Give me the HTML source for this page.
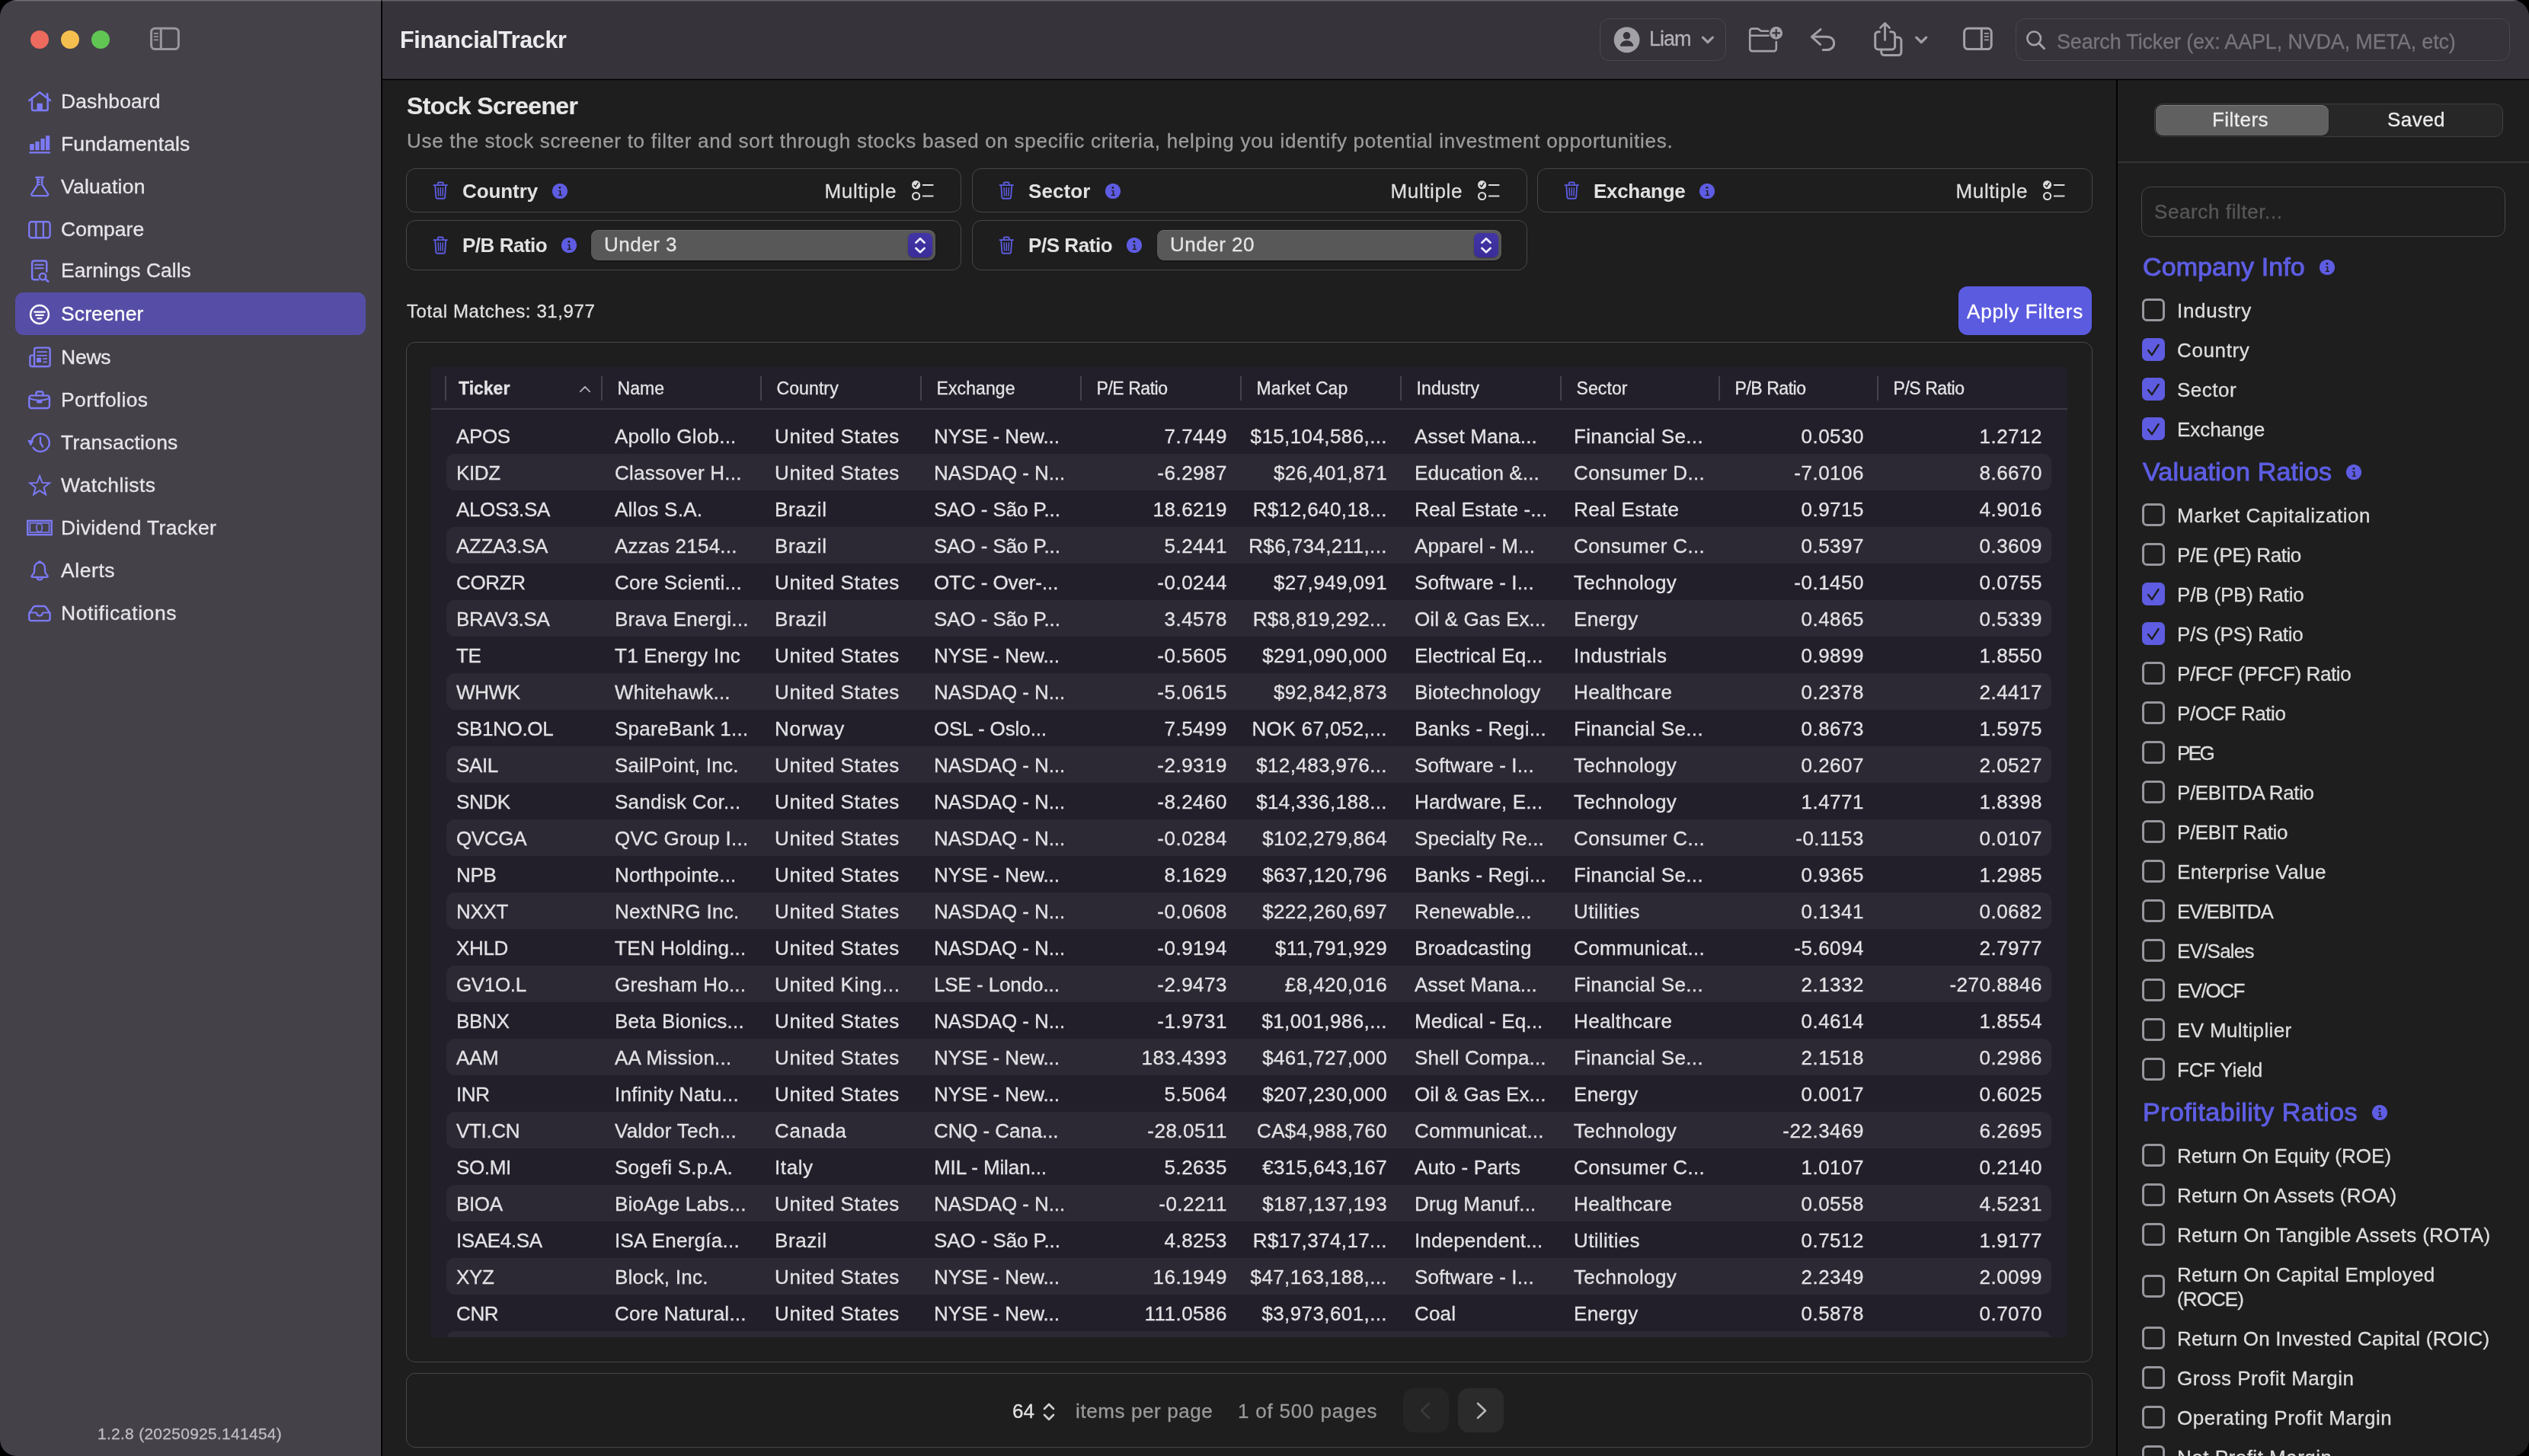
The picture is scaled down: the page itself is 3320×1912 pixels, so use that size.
<!DOCTYPE html>
<html lang="en"><head><meta charset="utf-8"><title>FinancialTrackr</title>
<style>
*{box-sizing:border-box;margin:0;padding:0}
html,body{width:3320px;height:1912px;background:#000;overflow:hidden}
body{font-family:"Liberation Sans",sans-serif;color:#e4e4e6;font-size:26px;-webkit-font-smoothing:antialiased;-webkit-text-stroke:.3px currentColor}
i{font-style:normal}
#win{position:absolute;left:0;top:0;width:3320px;height:1912px;border-radius:22px;overflow:hidden;background:#1e1e1e;will-change:transform}
#win:after{content:"";position:absolute;left:0;top:0;right:0;height:2px;background:linear-gradient(rgba(255,255,255,.3),rgba(255,255,255,.04));pointer-events:none}
@media (max-width:1700px){html,body{width:1660px;height:956px}#win{transform:scale(.5);transform-origin:0 0}}
/* sidebar */
#side{position:absolute;left:0;top:0;width:500px;height:1912px;background:#444149}
#sideline{position:absolute;left:500px;top:0;width:2px;height:1912px;background:#000}#side:after{content:"";position:absolute;right:0;top:0;width:1px;height:100%;background:#4c4a51}
.tl{position:absolute;top:40px;width:24px;height:24px;border-radius:50%}
.nav{position:absolute;left:20px;width:460px;height:56px;border-radius:11px}
.nav.sel{background:#564ea6}
.nav svg{position:absolute;left:12px;top:8px}
.nav span{position:absolute;left:60px;top:0;line-height:56px;font-size:26.5px;color:#e6e5e8;letter-spacing:.1px;white-space:nowrap}
.nav.sel span{color:#fff}
#ver{position:absolute;left:128px;top:1870px;font-size:21px;line-height:26px;color:#bdbcc1;letter-spacing:.27px;white-space:nowrap}
/* toolbar */
#barbg{position:absolute;left:502px;top:0;width:2818px;height:104px;background:#36333a}#bar{position:absolute;left:503px;top:0;width:2817px;height:104px}
#barline{position:absolute;left:502px;top:104px;width:2818px;height:1px;background:#000;box-shadow:0 -0.5px 0 rgba(0,0,0,.5),0 .5px 0 rgba(0,0,0,.4)}
#title{position:absolute;left:22px;top:32.2px;font-size:30.5px;line-height:40px;font-weight:bold;color:#ececee;letter-spacing:-.35px;white-space:nowrap;-webkit-text-stroke:0}
.tbtn{position:absolute;top:24px;height:56px;border:1.4px solid #4a484f;border-radius:13px}
/* main */
#main{position:absolute;left:503px;top:106px;width:2275px;height:1806px}
h1{position:absolute;left:31px;top:12.5px;font-size:32px;line-height:40px;font-weight:bold;color:#e6e6e6;letter-spacing:-.62px;-webkit-text-stroke:.2px;white-space:nowrap}
#sub{position:absolute;left:31px;top:63px;font-size:26px;line-height:32px;color:#9c9c9e;letter-spacing:.72px;white-space:nowrap}
.card{position:absolute;border:1px solid #474747;border-radius:12px}
.fc .trash{position:absolute;left:34.4px}
.fc .lbl{position:absolute;left:73px;font-weight:bold;font-size:26px;color:#e2e2e2;letter-spacing:-.1px;white-space:nowrap;-webkit-text-stroke:0}
.fc .iw{display:inline-block;margin-left:19px;vertical-align:middle;position:relative;top:-2px}.fc .iw svg{display:block}
.fc .mult{position:absolute;right:84px;font-size:26px;color:#dedede;letter-spacing:.6px;white-space:nowrap}
.fc .chk{position:absolute;right:34px}
.sel2{position:absolute;height:40px;top:12px;background:#585858;border-radius:9px;box-shadow:0 1px 2px rgba(0,0,0,.5), inset 0 1px 0 rgba(255,255,255,.12)}
.sel2 span{position:absolute;left:17.5px;top:0;line-height:38px;font-size:26px;color:#e4e4e4;letter-spacing:.5px}
.sel2 i{position:absolute;right:4px;top:4px;width:32px;height:32px;border-radius:7px;background:linear-gradient(#4235a6,#3a2d98);box-shadow:0 1px 2px rgba(0,0,0,.35)}
#tm{position:absolute;left:31px;top:288px;font-size:24px;line-height:30px;color:#e0e0e0;letter-spacing:.6px;white-space:nowrap}
#apply{position:absolute;left:2068px;top:270px;width:175px;height:64px;border-radius:12px;background:#5b5be0;color:#fff;font-size:26px;line-height:67.5px;text-align:center;letter-spacing:.75px;white-space:nowrap}
/* table */
.tbl{position:absolute;left:63px;top:376px;width:2148px;height:1274px;background:#221f2a;overflow:hidden}
.tbl .sep{position:absolute;top:12px;width:2px;height:32px;background:#45424d}
.tbl .th{position:absolute;top:13px;line-height:30px;font-size:23px;color:#e3e3e6;letter-spacing:.1px;white-space:nowrap}
.tbl .th.b{font-weight:bold;letter-spacing:0}
.tbl .sort{position:absolute;left:194px;top:23px}
.tbl .hline{position:absolute;left:0;right:0;top:54px;height:2px;background:#3b3946}
.row{position:absolute;left:20px;width:2107px;height:48px;border-radius:11px}
.row.alt{background:#2c2934}
.row .c{position:absolute;top:.8px;line-height:48px;font-size:26px;color:#e2e2e5;white-space:nowrap;letter-spacing:.35px}
.k0{letter-spacing:-.35px!important}.k1{letter-spacing:.25px!important}.k2{letter-spacing:.6px!important}.k3{letter-spacing:-.1px!important}.k4,.k8,.k9{letter-spacing:.5px!important}.k5{letter-spacing:.4px!important}.k6{letter-spacing:.15px!important}.k7{letter-spacing:.35px!important}
.tbl .th.rt{letter-spacing:-.45px}
/* pagination */
.pg{position:absolute;top:1717px;font-size:26px;line-height:32px;white-space:nowrap;letter-spacing:.6px}
.pbtn{position:absolute;top:1717px;width:60px;height:58px;border-radius:14px;background:#2b2b2b}
/* right panel */
#rline{position:absolute;left:2778px;top:104px;width:2px;height:1808px;background:#000}
#right{position:absolute;left:2780px;top:104px;width:540px;height:1808px;background:#1e1e1e;overflow:hidden}
#seg{position:absolute;left:48px;top:32px;width:458px;height:44px;border-radius:11px;background:#272727;border:1px solid #404040}
#seg b{position:absolute;left:1px;top:1px;width:227px;height:40px;border-radius:9px;background:#606060;box-shadow:0 1px 2px rgba(0,0,0,.4),inset 0 1px 0 rgba(255,255,255,.2)}
#seg span{position:absolute;top:1px;line-height:38px;font-size:26px;color:#ececec;width:226px;text-align:center;letter-spacing:.45px}
#rdiv{position:absolute;left:0;top:108px;width:540px;height:2px;background:#333}
#sf{position:absolute;left:31px;top:141px;width:478px;height:66px;border:1px solid #474747;border-radius:12px}
#sf span{position:absolute;left:16px;top:0;line-height:64px;font-size:26px;color:#585858;letter-spacing:.6px}
.gh{position:absolute;left:33px;height:48px;white-space:nowrap}
.gh span{font-size:34px;line-height:48px;color:#5d5de3;letter-spacing:.45px;-webkit-text-stroke:1px #5d5de3}
.gh .info{position:relative;margin-left:19px;top:-1px}
.cb{position:absolute;left:32px;width:30px;height:30px;border:3px solid #98979d;border-radius:6.5px}
.cb.on{border:0;background:#5e5ce0}
.cb svg{position:absolute;left:0;top:0}
.cl{position:absolute;left:78px;margin-top:.6px;line-height:32px;font-size:26px;color:#dedede;letter-spacing:.3px;white-space:nowrap}
</style></head>
<body>
<div id="win">
<!-- SIDEBAR -->
<div id="side">
<i class="tl" style="left:40px;background:#ed6a5e"></i><i class="tl" style="left:80px;background:#f5bf4f"></i><i class="tl" style="left:120px;background:#61c554"></i>
<svg style="position:absolute;left:190px;top:30px" width="52" height="42" viewBox="190 30 52 42"><g fill="none" stroke="#98979c" stroke-linecap="round"><rect x="198.6" y="37.2" width="35.8" height="27.4" rx="5" stroke-width="3"/><path d="M211.3 37.5v27" stroke-width="3"/><path d="M202.6 43.8h4.6M202.6 48.1h4.6M202.6 52.4h4.6" stroke-width="1.8"/></g></svg>
<div class="nav" style="top:104.5px"><svg width="40" height="40" viewBox="0 0 40 40" style="color:#7c7af6"><path d="M6.2 18.9 L20.2 8.2 L34 18.9" fill="none" stroke="currentColor" stroke-width="2.5" stroke-linecap="round" stroke-linejoin="round"/><path d="M30.1 10.4v4.6" fill="none" stroke="currentColor" stroke-linecap="round" stroke-linejoin="round" stroke-width="2.8"/><path d="M10 16.6v13.5a2 2 0 0 0 2 2h16.7a2 2 0 0 0 2-2V16.6" fill="none" stroke="currentColor" stroke-width="2.5" stroke-linecap="round" stroke-linejoin="round"/><rect x="16.5" y="22.7" width="7.4" height="9.6" fill="currentColor"/></svg><span style="letter-spacing:0.11px">Dashboard</span></div>
<div class="nav" style="top:160.5px"><svg width="40" height="40" viewBox="0 0 40 40" style="color:#7c7af6"><rect x="7.1" y="20" width="5.7" height="8.2" rx="1" fill="currentColor"/><rect x="14.3" y="16.8" width="5.3" height="11.4" rx="1" fill="currentColor"/><rect x="21.4" y="12.9" width="5.3" height="15.3" rx="1" fill="currentColor"/><rect x="28" y="8.9" width="5.3" height="19.3" rx="1" fill="currentColor"/><rect x="6.1" y="30.2" width="28.1" height="2.3" rx="1.1" fill="currentColor"/></svg><span style="letter-spacing:0.12px">Fundamentals</span></div>
<div class="nav" style="top:216.5px"><svg width="40" height="40" viewBox="0 0 40 40" style="color:#7c7af6"><path d="M15.3 7.9h9.8" fill="none" stroke="currentColor" stroke-linecap="round" stroke-linejoin="round" stroke-width="2.3"/><path d="M17.3 8.2v9.4L9.6 29.3c-.900 1.4 0 2.9 1.6 2.9h18c1.6 0 2.5-1.5 1.6-2.9L23.3 17.6V8.2" fill="none" stroke="currentColor" stroke-linecap="round" stroke-linejoin="round" stroke-width="2.3"/><path d="M18 10.9h2.6M18 14.2h2.6M18 17.4h2.6" fill="none" stroke="currentColor" stroke-linecap="round" stroke-linejoin="round" stroke-width="1.7"/></svg><span style="letter-spacing:0.23px">Valuation</span></div>
<div class="nav" style="top:272.5px"><svg width="40" height="40" viewBox="0 0 40 40" style="color:#7c7af6"><rect x="6.25" y="10.25" width="27.4" height="21" rx="3.2" fill="none" stroke="currentColor" stroke-linecap="round" stroke-linejoin="round" stroke-width="2.3"/><path d="M15.3 10.4v20.7M24.9 10.4v20.7" fill="none" stroke="currentColor" stroke-linecap="round" stroke-linejoin="round" stroke-width="2.3"/></svg><span style="letter-spacing:0.03px">Compare</span></div>
<div class="nav" style="top:326.5px"><svg width="40" height="40" viewBox="0 0 40 40" style="color:#7c7af6"><path d="M18.2 32.25H13a2.85 2.85 0 0 1-2.85-2.85V10.4A2.85 2.85 0 0 1 13 7.55h13.4a2.85 2.85 0 0 1 2.85 2.85v11.4" fill="none" stroke="currentColor" stroke-width="2.5" stroke-linecap="round" stroke-linejoin="round"/><path d="M14 12.8h10.8M14 17.3h10.8" fill="none" stroke="currentColor" stroke-linecap="round" stroke-linejoin="round" stroke-width="2"/><circle cx="24" cy="28.2" r="4.3" fill="none" stroke="currentColor" stroke-width="2.5" stroke-linecap="round" stroke-linejoin="round"/><path d="M27.3 31.3l3.9 3.3" fill="none" stroke="currentColor" stroke-linecap="round" stroke-linejoin="round" stroke-width="2.7"/></svg><span style="letter-spacing:0px">Earnings Calls</span></div>
<div class="nav sel" style="top:384px"><svg width="40" height="40" viewBox="0 0 40 40" style="color:#fff"><circle cx="20" cy="21" r="11.9" fill="none" stroke="currentColor" stroke-width="2.5" stroke-linecap="round" stroke-linejoin="round"/><path d="M13.3 17.7h13.4M15.1 21.8h9.8M17.4 26.1h5.2" fill="none" stroke="currentColor" stroke-linecap="round" stroke-linejoin="round" stroke-width="2.2"/></svg><span style="letter-spacing:0.12px">Screener</span></div>
<div class="nav" style="top:440.5px"><svg width="40" height="40" viewBox="0 0 40 40" style="color:#7c7af6"><path d="M13.05 32.25V10.45a2.8 2.8 0 0 1 2.8-2.8h15a2.8 2.8 0 0 1 2.8 2.8v19a2.8 2.8 0 0 1-2.8 2.8H10.15a2.8 2.8 0 0 1-2.8-2.8V20.25a2.6 2.6 0 0 1 2.6-2.6h3" fill="none" stroke="currentColor" stroke-linecap="round" stroke-linejoin="round" stroke-width="2.4"/><path d="M17.2 13.1h12M17.2 17.8h12M25 22.1h4.2M25 26.4h4.2" fill="none" stroke="currentColor" stroke-linecap="round" stroke-linejoin="round" stroke-width="1.7"/><rect x="16" y="20.7" width="6.1" height="6.4" rx="1.2" fill="currentColor"/></svg><span style="letter-spacing:-0.22px">News</span></div>
<div class="nav" style="top:496.5px"><svg width="40" height="40" viewBox="0 0 40 40" style="color:#7c7af6"><rect x="6.25" y="14.35" width="26.7" height="16.7" rx="3" fill="none" stroke="currentColor" stroke-linecap="round" stroke-linejoin="round" stroke-width="2.4"/><path d="M15.5 14.2v-2.5a2.4 2.4 0 0 1 2.4-2.4h4.2a2.4 2.4 0 0 1 2.4 2.4v2.5" fill="none" stroke="currentColor" stroke-linecap="round" stroke-linejoin="round" stroke-width="2.4"/><path d="M6.6 18.2c3.8 1.7 8.2 2.5 13 2.5s9.2-.8 13-2.5" fill="none" stroke="currentColor" stroke-linecap="round" stroke-linejoin="round" stroke-width="2"/><rect x="16.1" y="20.2" width="7.4" height="4.3" rx="1.4" fill="currentColor"/></svg><span style="letter-spacing:0.4px">Portfolios</span></div>
<div class="nav" style="top:552.5px"><svg width="40" height="40" viewBox="0 0 40 40" style="color:#7c7af6"><path d="M9.85 17.99A11.6 11.6 0 1 1 11.58 26.89" fill="none" stroke="currentColor" stroke-linecap="round" stroke-linejoin="round" stroke-width="2.4"/><path d="M5 17.3l6.3 1-3 5.4z" fill="currentColor" stroke="currentColor" stroke-width="1.2" stroke-linejoin="round"/><path d="M21 13.3v7.3l3.2 5" fill="none" stroke="currentColor" stroke-linecap="round" stroke-linejoin="round" stroke-width="2.3"/></svg><span style="letter-spacing:0.24px">Transactions</span></div>
<div class="nav" style="top:608.5px"><svg width="40" height="40" viewBox="0 0 40 40" style="color:#7c7af6"><path d="M20.1 8 L23.45 16.89 L32.94 17.33 L25.52 23.26 L28.04 32.42 L20.1 27.2 L12.16 32.42 L14.68 23.26 L7.26 17.33 L16.75 16.89z" fill="none" stroke="currentColor" stroke-linecap="round" stroke-width="2" stroke-linejoin="miter" stroke-miterlimit="10"/></svg><span style="letter-spacing:0.48px">Watchlists</span></div>
<div class="nav" style="top:664.5px"><svg width="40" height="40" viewBox="0 0 40 40" style="color:#7c7af6"><rect x="4.2" y="10.9" width="31.5" height="18.3" fill="none" stroke="currentColor" stroke-linecap="round" stroke-width="2.4" stroke-linejoin="miter"/><rect x="7.3" y="13.8" width="25.2" height="12.3" fill="none" stroke="currentColor" stroke-linecap="round" stroke-width="1.6" stroke-linejoin="miter"/><ellipse cx="19.65" cy="20.05" rx="3.8" ry="5.5" fill="none" stroke="currentColor" stroke-linecap="round" stroke-linejoin="round" stroke-width="1.6"/></svg><span style="letter-spacing:0.33px">Dividend Tracker</span></div>
<div class="nav" style="top:720.5px"><svg width="40" height="40" viewBox="0 0 40 40" style="color:#7c7af6"><path d="M20.1 9.7c-4.3 0-6.9 3.1-6.9 7.4v3.7c0 2-.9 3.5-2.4 5-.9.9-1.3 1.4-1.3 2 0 .7.6 1.1 1.5 1.1h18.2c.9 0 1.5-.4 1.5-1.1 0-.6-.4-1.1-1.3-2-1.5-1.5-2.4-3-2.4-5v-3.7c0-4.3-2.6-7.4-6.9-7.4z" fill="none" stroke="currentColor" stroke-linecap="round" stroke-linejoin="round" stroke-width="2.3"/><path d="M18.3 9.6c.2-1 .9-1.5 1.8-1.5s1.6.5 1.8 1.5" fill="none" stroke="currentColor" stroke-linecap="round" stroke-linejoin="round" stroke-width="1.8"/><path d="M16.6 29.8c.3 1.6 1.7 2.6 3.5 2.6s3.2-1 3.5-2.6" fill="none" stroke="currentColor" stroke-linecap="round" stroke-linejoin="round" stroke-width="2.2"/></svg><span style="letter-spacing:0.57px">Alerts</span></div>
<div class="nav" style="top:776.5px"><svg width="40" height="40" viewBox="0 0 40 40" style="color:#7c7af6"><path d="M6.25 20.3l5.4-8a3 3 0 0 1 2.5-1.3h11.6a3 3 0 0 1 2.5 1.3l5.4 8v6.9a2.9 2.9 0 0 1-2.9 2.9H9.15a2.9 2.9 0 0 1-2.9-2.9z" fill="none" stroke="currentColor" stroke-linecap="round" stroke-linejoin="round" stroke-width="2.4"/><path d="M6.6 19.5h8.4c.7 0 1.1.4 1.2 1 .3 1.9 1.8 3.1 3.75 3.1s3.45-1.2 3.75-3.1c.1-.6.5-1 1.2-1h8.4" fill="none" stroke="currentColor" stroke-linecap="round" stroke-linejoin="round" stroke-width="2.2"/></svg><span style="letter-spacing:0.6px">Notifications</span></div>
<div id="ver">1.2.8 (20250925.141454)</div>
</div>
<div id="sideline"></div>
<!-- TOOLBAR -->
<div id="barbg"></div>
<div id="bar">
<div id="title">FinancialTrackr</div>
<div style="position:absolute;left:-503px;top:0;width:3320px;height:104px">
<div class="tbtn" style="left:2100px;width:166px"></div>
<div class="tbtn" style="left:2646px;width:649.4px"></div>
<div style="position:absolute;left:2165px;top:31px;line-height:40px;font-size:27px;color:#b3b2b7;letter-spacing:-1px">Liam</div>
<div style="position:absolute;left:2700px;top:35px;line-height:40px;font-size:27px;color:#77757c;letter-spacing:-.17px;white-space:nowrap">Search Ticker (ex: AAPL, NVDA, META, etc)</div>
<svg style="position:absolute;left:2090px;top:0" width="640" height="104" viewBox="2090 0 640 104">
<circle cx="2135.6" cy="52.3" r="16.9" fill="#a2a1a6"/><circle cx="2135.5" cy="46.8" r="4.8" fill="#36333a"/><path d="M2127.8 60.7c-.600 0-.900-.400-.800-1 .800-3.9 4-6.5 8.6-6.5s7.8 2.6 8.6 6.5c.100.6-.200 1-.800 1z" fill="#36333a"/>
<path d="M2235.4 49.2l6.5 6.3 6.5-6.3" fill="none" stroke="#a2a1a6" stroke-linecap="round" stroke-linejoin="round" stroke-width="3.2"/>
<path d="M2515.7 49.2l6.5 6.3 6.5-6.3" fill="none" stroke="#a2a1a6" stroke-linecap="round" stroke-linejoin="round" stroke-width="3.2"/>
<path d="M2331.8 55v9.1a3 3 0 0 1-3 3h-28.6a3 3 0 0 1-3-3V40.6a3 3 0 0 1 3-3h6.4c1 0 1.7.300 2.4.900l1.5 1.3c.700.6 1.4.900 2.4.900h8.3" fill="none" stroke="#a2a1a6" stroke-width="2.6" stroke-linecap="round" stroke-linejoin="round"/><path d="M2297.4 46.7h24.2" fill="none" stroke="#a2a1a6" stroke-width="2.6" stroke-linecap="round" stroke-linejoin="round"/>
<circle cx="2331.7" cy="43.4" r="8.4" fill="#a2a1a6"/><path d="M2331.7 39v8.8M2327.3 43.4h8.8" stroke="#36333a" stroke-width="2.1" stroke-linecap="round"/>
<path d="M2390 38.6l-11.6 9.7 11.2 10.2" fill="none" stroke="#a2a1a6" stroke-linecap="round" stroke-linejoin="round" stroke-width="3"/><path d="M2379.4 48.3h18.4c6.2 0 9.8 3.6 9.8 8.6s-3.8 8.7-9.8 8.7h-4.6" fill="none" stroke="#a2a1a6" stroke-linecap="round" stroke-linejoin="round" stroke-width="3"/>
<path d="M2467.4 41.7h-1.7a4 4 0 0 0-4 4v15.2a4 4 0 0 0 4 4h17.9a4 4 0 0 0 4-4V45.7a4 4 0 0 0-4-4h-2" fill="none" stroke="#a2a1a6" stroke-linecap="round" stroke-linejoin="round" stroke-width="3"/>
<path d="M2469.7 66.8v1.8a4 4 0 0 0 4 4h18.2a4 4 0 0 0 4-4V53.1a4 4 0 0 0-4-4h-2.3" fill="none" stroke="#a2a1a6" stroke-linecap="round" stroke-linejoin="round" stroke-width="3"/>
<path d="M2474.5 52.6V30.6M2468.5 36.4l6-5.9 6 5.9" fill="none" stroke="#a2a1a6" stroke-linecap="round" stroke-linejoin="round" stroke-width="2.8"/>
<rect x="2578.6" y="37.3" width="35.6" height="27.3" rx="5" fill="none" stroke="#a2a1a6" stroke-linecap="round" stroke-linejoin="round" stroke-width="3"/><path d="M2601.3 37.5v27" fill="none" stroke="#a2a1a6" stroke-linecap="round" stroke-linejoin="round" stroke-width="3"/><path d="M2605.6 43.8h4.6M2605.6 48.1h4.6M2605.6 52.4h4.6" fill="none" stroke="#a2a1a6" stroke-linecap="round" stroke-linejoin="round" stroke-width="1.8"/>
<circle cx="2670.2" cy="50.3" r="8.8" fill="none" stroke="#a2a1a6" stroke-width="2.6" stroke-linecap="round" stroke-linejoin="round"/><path d="M2676.8 56.9l6.8 6.8" fill="none" stroke="#a2a1a6" stroke-linecap="round" stroke-linejoin="round" stroke-width="3"/>
</svg>
</div>
</div>
<!-- MAIN -->
<div id="main">
<h1>Stock Screener</h1>
<div id="sub">Use the stock screener to filter and sort through stocks based on specific criteria, helping you identify potential investment opportunities.</div>
<div class="card fc" style="left:30px;top:115px;width:729px;height:58px"><svg class="trash" style="top:16.4px" width="20.5" height="24" viewBox="0 0 22 26"><g fill="none" stroke="#5c5ce0" stroke-width="2" stroke-linecap="round" stroke-linejoin="round"><path d="M1.5 5.6h19"/><path d="M7.2 5.4V3.2a1.6 1.6 0 0 1 1.6-1.6h4.4a1.6 1.6 0 0 1 1.6 1.6v2.2"/><path d="M3.4 5.8l1.2 16.6a2.4 2.4 0 0 0 2.4 2.2h8a2.4 2.4 0 0 0 2.4-2.2l1.2-16.6"/><path d="M7.6 9.6l.5 11M11 9.6v11M14.4 9.6l-.5 11" stroke-width="1.6"/></g></svg><span class="lbl" style="top:0;line-height:59.5px;letter-spacing:-0.08px">Country<span class="iw"><svg class="info" width="20" height="20" viewBox="0 0 20 20"><circle cx="10" cy="10" r="10.1" fill="#5e5ce2"/><circle cx="9.9" cy="5.4" r="1.45" fill="#1e1e1e"/><path d="M8 8.9h3.3v5.8h1.7v1.2H7.8v-1.2h1.9v-4.6H8z" fill="#1e1e1e"/></svg></span></span><span class="mult" style="top:0;line-height:58px">Multiple</span><svg class="chk" style="top:15px" width="30" height="26" viewBox="0 0 30 26"><circle cx="5.6" cy="5.7" r="5.6" fill="#dcdcdc"/><path d="M3.2 6.2l1.8 2 3.1-4.8" fill="none" stroke="#1e1e1e" stroke-width="1.5" stroke-linecap="round" stroke-linejoin="round"/><circle cx="5.6" cy="20.5" r="4.55" fill="none" stroke="#dcdcdc" stroke-width="2.1"/><path d="M14.8 6h12.8M14.8 20.5h12.8" stroke="#dcdcdc" stroke-width="2.1" stroke-linecap="round"/></svg></div>
<div class="card fc" style="left:773px;top:115px;width:729px;height:58px"><svg class="trash" style="top:16.4px" width="20.5" height="24" viewBox="0 0 22 26"><g fill="none" stroke="#5c5ce0" stroke-width="2" stroke-linecap="round" stroke-linejoin="round"><path d="M1.5 5.6h19"/><path d="M7.2 5.4V3.2a1.6 1.6 0 0 1 1.6-1.6h4.4a1.6 1.6 0 0 1 1.6 1.6v2.2"/><path d="M3.4 5.8l1.2 16.6a2.4 2.4 0 0 0 2.4 2.2h8a2.4 2.4 0 0 0 2.4-2.2l1.2-16.6"/><path d="M7.6 9.6l.5 11M11 9.6v11M14.4 9.6l-.5 11" stroke-width="1.6"/></g></svg><span class="lbl" style="top:0;line-height:59.5px;letter-spacing:0.1px">Sector<span class="iw"><svg class="info" width="20" height="20" viewBox="0 0 20 20"><circle cx="10" cy="10" r="10.1" fill="#5e5ce2"/><circle cx="9.9" cy="5.4" r="1.45" fill="#1e1e1e"/><path d="M8 8.9h3.3v5.8h1.7v1.2H7.8v-1.2h1.9v-4.6H8z" fill="#1e1e1e"/></svg></span></span><span class="mult" style="top:0;line-height:58px">Multiple</span><svg class="chk" style="top:15px" width="30" height="26" viewBox="0 0 30 26"><circle cx="5.6" cy="5.7" r="5.6" fill="#dcdcdc"/><path d="M3.2 6.2l1.8 2 3.1-4.8" fill="none" stroke="#1e1e1e" stroke-width="1.5" stroke-linecap="round" stroke-linejoin="round"/><circle cx="5.6" cy="20.5" r="4.55" fill="none" stroke="#dcdcdc" stroke-width="2.1"/><path d="M14.8 6h12.8M14.8 20.5h12.8" stroke="#dcdcdc" stroke-width="2.1" stroke-linecap="round"/></svg></div>
<div class="card fc" style="left:1515px;top:115px;width:729px;height:58px"><svg class="trash" style="top:16.4px" width="20.5" height="24" viewBox="0 0 22 26"><g fill="none" stroke="#5c5ce0" stroke-width="2" stroke-linecap="round" stroke-linejoin="round"><path d="M1.5 5.6h19"/><path d="M7.2 5.4V3.2a1.6 1.6 0 0 1 1.6-1.6h4.4a1.6 1.6 0 0 1 1.6 1.6v2.2"/><path d="M3.4 5.8l1.2 16.6a2.4 2.4 0 0 0 2.4 2.2h8a2.4 2.4 0 0 0 2.4-2.2l1.2-16.6"/><path d="M7.6 9.6l.5 11M11 9.6v11M14.4 9.6l-.5 11" stroke-width="1.6"/></g></svg><span class="lbl" style="top:0;line-height:59.5px;letter-spacing:-0.3px">Exchange<span class="iw"><svg class="info" width="20" height="20" viewBox="0 0 20 20"><circle cx="10" cy="10" r="10.1" fill="#5e5ce2"/><circle cx="9.9" cy="5.4" r="1.45" fill="#1e1e1e"/><path d="M8 8.9h3.3v5.8h1.7v1.2H7.8v-1.2h1.9v-4.6H8z" fill="#1e1e1e"/></svg></span></span><span class="mult" style="top:0;line-height:58px">Multiple</span><svg class="chk" style="top:15px" width="30" height="26" viewBox="0 0 30 26"><circle cx="5.6" cy="5.7" r="5.6" fill="#dcdcdc"/><path d="M3.2 6.2l1.8 2 3.1-4.8" fill="none" stroke="#1e1e1e" stroke-width="1.5" stroke-linecap="round" stroke-linejoin="round"/><circle cx="5.6" cy="20.5" r="4.55" fill="none" stroke="#dcdcdc" stroke-width="2.1"/><path d="M14.8 6h12.8M14.8 20.5h12.8" stroke="#dcdcdc" stroke-width="2.1" stroke-linecap="round"/></svg></div>
<div class="card fc" style="left:30px;top:183px;width:729px;height:66px"><svg class="trash" style="top:20.4px" width="20.5" height="24" viewBox="0 0 22 26"><g fill="none" stroke="#5c5ce0" stroke-width="2" stroke-linecap="round" stroke-linejoin="round"><path d="M1.5 5.6h19"/><path d="M7.2 5.4V3.2a1.6 1.6 0 0 1 1.6-1.6h4.4a1.6 1.6 0 0 1 1.6 1.6v2.2"/><path d="M3.4 5.8l1.2 16.6a2.4 2.4 0 0 0 2.4 2.2h8a2.4 2.4 0 0 0 2.4-2.2l1.2-16.6"/><path d="M7.6 9.6l.5 11M11 9.6v11M14.4 9.6l-.5 11" stroke-width="1.6"/></g></svg><span class="lbl" style="top:0;line-height:65px;letter-spacing:-0.48px">P/B Ratio<span class="iw"><svg class="info" width="20" height="20" viewBox="0 0 20 20"><circle cx="10" cy="10" r="10.1" fill="#5e5ce2"/><circle cx="9.9" cy="5.4" r="1.45" fill="#1e1e1e"/><path d="M8 8.9h3.3v5.8h1.7v1.2H7.8v-1.2h1.9v-4.6H8z" fill="#1e1e1e"/></svg></span></span><div class="sel2" style="left:241.5px;width:452px"><span>Under 3</span><i><svg width="32" height="32" viewBox="0 0 32 32"><path d="M10.3 12.7L16 7.2l5.7 5.5M10.3 19.8L16 25.3l5.7-5.5" fill="none" stroke="#efecfb" stroke-width="2.6" stroke-linecap="round" stroke-linejoin="round"/></svg></i></div></div>
<div class="card fc" style="left:773px;top:183px;width:729px;height:66px"><svg class="trash" style="top:20.4px" width="20.5" height="24" viewBox="0 0 22 26"><g fill="none" stroke="#5c5ce0" stroke-width="2" stroke-linecap="round" stroke-linejoin="round"><path d="M1.5 5.6h19"/><path d="M7.2 5.4V3.2a1.6 1.6 0 0 1 1.6-1.6h4.4a1.6 1.6 0 0 1 1.6 1.6v2.2"/><path d="M3.4 5.8l1.2 16.6a2.4 2.4 0 0 0 2.4 2.2h8a2.4 2.4 0 0 0 2.4-2.2l1.2-16.6"/><path d="M7.6 9.6l.5 11M11 9.6v11M14.4 9.6l-.5 11" stroke-width="1.6"/></g></svg><span class="lbl" style="top:0;line-height:65px;letter-spacing:-0.44px">P/S Ratio<span class="iw"><svg class="info" width="20" height="20" viewBox="0 0 20 20"><circle cx="10" cy="10" r="10.1" fill="#5e5ce2"/><circle cx="9.9" cy="5.4" r="1.45" fill="#1e1e1e"/><path d="M8 8.9h3.3v5.8h1.7v1.2H7.8v-1.2h1.9v-4.6H8z" fill="#1e1e1e"/></svg></span></span><div class="sel2" style="left:241.5px;width:452px"><span>Under 20</span><i><svg width="32" height="32" viewBox="0 0 32 32"><path d="M10.3 12.7L16 7.2l5.7 5.5M10.3 19.8L16 25.3l5.7-5.5" fill="none" stroke="#efecfb" stroke-width="2.6" stroke-linecap="round" stroke-linejoin="round"/></svg></i></div></div>
<div id="tm">Total Matches: 31,977</div>
<div id="apply">Apply Filters</div>
<div class="card" style="left:30px;top:343px;width:2214px;height:1340px"></div>
<div class="tbl">
<i class="sep" style="left:18px"></i>
<div class="th b" style="left:36px">Ticker</div>
<i class="sep" style="left:223px"></i>
<div class="th" style="left:244.5px">Name</div>
<i class="sep" style="left:432px"></i>
<div class="th" style="left:453.5px">Country</div>
<i class="sep" style="left:642px"></i>
<div class="th" style="left:663.5px">Exchange</div>
<i class="sep" style="left:852px"></i>
<div class="th rt" style="left:873.5px">P/E Ratio</div>
<i class="sep" style="left:1062px"></i>
<div class="th" style="left:1083.5px">Market Cap</div>
<i class="sep" style="left:1272px"></i>
<div class="th" style="left:1293.5px">Industry</div>
<i class="sep" style="left:1482px"></i>
<div class="th" style="left:1503.5px">Sector</div>
<i class="sep" style="left:1690px"></i>
<div class="th rt" style="left:1711.5px">P/B Ratio</div>
<i class="sep" style="left:1898px"></i>
<div class="th rt" style="left:1919.5px">P/S Ratio</div>
<svg class="sort" width="18" height="10" viewBox="0 0 18 10"><path d="M1.8 9.3 L8 2.9 L14.2 9.3" fill="none" stroke="#adabb5" stroke-width="1.9" stroke-linecap="round" stroke-linejoin="round"/></svg>
<div class="hline"></div>
<div class="row" style="top:66px">
<span class="c k0" style="left:13px">APOS</span>
<span class="c k1" style="left:221px">Apollo Glob...</span>
<span class="c k2" style="left:431px">United States</span>
<span class="c k3" style="left:640px">NYSE - New...</span>
<span class="c r k4" style="right:1082px">7.7449</span>
<span class="c r k5" style="right:872px">$15,104,586,...</span>
<span class="c k6" style="left:1271px">Asset Mana...</span>
<span class="c k7" style="left:1480px">Financial Se...</span>
<span class="c r k8" style="right:246px">0.0530</span>
<span class="c r k9" style="right:12px">1.2712</span>
</div>
<div class="row alt" style="top:114px">
<span class="c k0" style="left:13px">KIDZ</span>
<span class="c k1" style="left:221px">Classover H...</span>
<span class="c k2" style="left:431px">United States</span>
<span class="c k3" style="left:640px">NASDAQ - N...</span>
<span class="c r k4" style="right:1082px">-6.2987</span>
<span class="c r k5" style="right:872px">$26,401,871</span>
<span class="c k6" style="left:1271px">Education &amp;...</span>
<span class="c k7" style="left:1480px">Consumer D...</span>
<span class="c r k8" style="right:246px">-7.0106</span>
<span class="c r k9" style="right:12px">8.6670</span>
</div>
<div class="row" style="top:162px">
<span class="c k0" style="left:13px">ALOS3.SA</span>
<span class="c k1" style="left:221px">Allos S.A.</span>
<span class="c k2" style="left:431px">Brazil</span>
<span class="c k3" style="left:640px">SAO - São P...</span>
<span class="c r k4" style="right:1082px">18.6219</span>
<span class="c r k5" style="right:872px">R$12,640,18...</span>
<span class="c k6" style="left:1271px">Real Estate -...</span>
<span class="c k7" style="left:1480px">Real Estate</span>
<span class="c r k8" style="right:246px">0.9715</span>
<span class="c r k9" style="right:12px">4.9016</span>
</div>
<div class="row alt" style="top:210px">
<span class="c k0" style="left:13px">AZZA3.SA</span>
<span class="c k1" style="left:221px">Azzas 2154...</span>
<span class="c k2" style="left:431px">Brazil</span>
<span class="c k3" style="left:640px">SAO - São P...</span>
<span class="c r k4" style="right:1082px">5.2441</span>
<span class="c r k5" style="right:872px">R$6,734,211,...</span>
<span class="c k6" style="left:1271px">Apparel - M...</span>
<span class="c k7" style="left:1480px">Consumer C...</span>
<span class="c r k8" style="right:246px">0.5397</span>
<span class="c r k9" style="right:12px">0.3609</span>
</div>
<div class="row" style="top:258px">
<span class="c k0" style="left:13px">CORZR</span>
<span class="c k1" style="left:221px">Core Scienti...</span>
<span class="c k2" style="left:431px">United States</span>
<span class="c k3" style="left:640px">OTC - Over-...</span>
<span class="c r k4" style="right:1082px">-0.0244</span>
<span class="c r k5" style="right:872px">$27,949,091</span>
<span class="c k6" style="left:1271px">Software - I...</span>
<span class="c k7" style="left:1480px">Technology</span>
<span class="c r k8" style="right:246px">-0.1450</span>
<span class="c r k9" style="right:12px">0.0755</span>
</div>
<div class="row alt" style="top:306px">
<span class="c k0" style="left:13px">BRAV3.SA</span>
<span class="c k1" style="left:221px">Brava Energi...</span>
<span class="c k2" style="left:431px">Brazil</span>
<span class="c k3" style="left:640px">SAO - São P...</span>
<span class="c r k4" style="right:1082px">3.4578</span>
<span class="c r k5" style="right:872px">R$8,819,292...</span>
<span class="c k6" style="left:1271px">Oil &amp; Gas Ex...</span>
<span class="c k7" style="left:1480px">Energy</span>
<span class="c r k8" style="right:246px">0.4865</span>
<span class="c r k9" style="right:12px">0.5339</span>
</div>
<div class="row" style="top:354px">
<span class="c k0" style="left:13px">TE</span>
<span class="c k1" style="left:221px">T1 Energy Inc</span>
<span class="c k2" style="left:431px">United States</span>
<span class="c k3" style="left:640px">NYSE - New...</span>
<span class="c r k4" style="right:1082px">-0.5605</span>
<span class="c r k5" style="right:872px">$291,090,000</span>
<span class="c k6" style="left:1271px">Electrical Eq...</span>
<span class="c k7" style="left:1480px">Industrials</span>
<span class="c r k8" style="right:246px">0.9899</span>
<span class="c r k9" style="right:12px">1.8550</span>
</div>
<div class="row alt" style="top:402px">
<span class="c k0" style="left:13px">WHWK</span>
<span class="c k1" style="left:221px">Whitehawk...</span>
<span class="c k2" style="left:431px">United States</span>
<span class="c k3" style="left:640px">NASDAQ - N...</span>
<span class="c r k4" style="right:1082px">-5.0615</span>
<span class="c r k5" style="right:872px">$92,842,873</span>
<span class="c k6" style="left:1271px">Biotechnology</span>
<span class="c k7" style="left:1480px">Healthcare</span>
<span class="c r k8" style="right:246px">0.2378</span>
<span class="c r k9" style="right:12px">2.4417</span>
</div>
<div class="row" style="top:450px">
<span class="c k0" style="left:13px">SB1NO.OL</span>
<span class="c k1" style="left:221px">SpareBank 1...</span>
<span class="c k2" style="left:431px">Norway</span>
<span class="c k3" style="left:640px">OSL - Oslo...</span>
<span class="c r k4" style="right:1082px">7.5499</span>
<span class="c r k5" style="right:872px">NOK 67,052,...</span>
<span class="c k6" style="left:1271px">Banks - Regi...</span>
<span class="c k7" style="left:1480px">Financial Se...</span>
<span class="c r k8" style="right:246px">0.8673</span>
<span class="c r k9" style="right:12px">1.5975</span>
</div>
<div class="row alt" style="top:498px">
<span class="c k0" style="left:13px">SAIL</span>
<span class="c k1" style="left:221px">SailPoint, Inc.</span>
<span class="c k2" style="left:431px">United States</span>
<span class="c k3" style="left:640px">NASDAQ - N...</span>
<span class="c r k4" style="right:1082px">-2.9319</span>
<span class="c r k5" style="right:872px">$12,483,976...</span>
<span class="c k6" style="left:1271px">Software - I...</span>
<span class="c k7" style="left:1480px">Technology</span>
<span class="c r k8" style="right:246px">0.2607</span>
<span class="c r k9" style="right:12px">2.0527</span>
</div>
<div class="row" style="top:546px">
<span class="c k0" style="left:13px">SNDK</span>
<span class="c k1" style="left:221px">Sandisk Cor...</span>
<span class="c k2" style="left:431px">United States</span>
<span class="c k3" style="left:640px">NASDAQ - N...</span>
<span class="c r k4" style="right:1082px">-8.2460</span>
<span class="c r k5" style="right:872px">$14,336,188...</span>
<span class="c k6" style="left:1271px">Hardware, E...</span>
<span class="c k7" style="left:1480px">Technology</span>
<span class="c r k8" style="right:246px">1.4771</span>
<span class="c r k9" style="right:12px">1.8398</span>
</div>
<div class="row alt" style="top:594px">
<span class="c k0" style="left:13px">QVCGA</span>
<span class="c k1" style="left:221px">QVC Group I...</span>
<span class="c k2" style="left:431px">United States</span>
<span class="c k3" style="left:640px">NASDAQ - N...</span>
<span class="c r k4" style="right:1082px">-0.0284</span>
<span class="c r k5" style="right:872px">$102,279,864</span>
<span class="c k6" style="left:1271px">Specialty Re...</span>
<span class="c k7" style="left:1480px">Consumer C...</span>
<span class="c r k8" style="right:246px">-0.1153</span>
<span class="c r k9" style="right:12px">0.0107</span>
</div>
<div class="row" style="top:642px">
<span class="c k0" style="left:13px">NPB</span>
<span class="c k1" style="left:221px">Northpointe...</span>
<span class="c k2" style="left:431px">United States</span>
<span class="c k3" style="left:640px">NYSE - New...</span>
<span class="c r k4" style="right:1082px">8.1629</span>
<span class="c r k5" style="right:872px">$637,120,796</span>
<span class="c k6" style="left:1271px">Banks - Regi...</span>
<span class="c k7" style="left:1480px">Financial Se...</span>
<span class="c r k8" style="right:246px">0.9365</span>
<span class="c r k9" style="right:12px">1.2985</span>
</div>
<div class="row alt" style="top:690px">
<span class="c k0" style="left:13px">NXXT</span>
<span class="c k1" style="left:221px">NextNRG Inc.</span>
<span class="c k2" style="left:431px">United States</span>
<span class="c k3" style="left:640px">NASDAQ - N...</span>
<span class="c r k4" style="right:1082px">-0.0608</span>
<span class="c r k5" style="right:872px">$222,260,697</span>
<span class="c k6" style="left:1271px">Renewable...</span>
<span class="c k7" style="left:1480px">Utilities</span>
<span class="c r k8" style="right:246px">0.1341</span>
<span class="c r k9" style="right:12px">0.0682</span>
</div>
<div class="row" style="top:738px">
<span class="c k0" style="left:13px">XHLD</span>
<span class="c k1" style="left:221px">TEN Holding...</span>
<span class="c k2" style="left:431px">United States</span>
<span class="c k3" style="left:640px">NASDAQ - N...</span>
<span class="c r k4" style="right:1082px">-0.9194</span>
<span class="c r k5" style="right:872px">$11,791,929</span>
<span class="c k6" style="left:1271px">Broadcasting</span>
<span class="c k7" style="left:1480px">Communicat...</span>
<span class="c r k8" style="right:246px">-5.6094</span>
<span class="c r k9" style="right:12px">2.7977</span>
</div>
<div class="row alt" style="top:786px">
<span class="c k0" style="left:13px">GV1O.L</span>
<span class="c k1" style="left:221px">Gresham Ho...</span>
<span class="c k2" style="left:431px">United King...</span>
<span class="c k3" style="left:640px">LSE - Londo...</span>
<span class="c r k4" style="right:1082px">-2.9473</span>
<span class="c r k5" style="right:872px">£8,420,016</span>
<span class="c k6" style="left:1271px">Asset Mana...</span>
<span class="c k7" style="left:1480px">Financial Se...</span>
<span class="c r k8" style="right:246px">2.1332</span>
<span class="c r k9" style="right:12px">-270.8846</span>
</div>
<div class="row" style="top:834px">
<span class="c k0" style="left:13px">BBNX</span>
<span class="c k1" style="left:221px">Beta Bionics...</span>
<span class="c k2" style="left:431px">United States</span>
<span class="c k3" style="left:640px">NASDAQ - N...</span>
<span class="c r k4" style="right:1082px">-1.9731</span>
<span class="c r k5" style="right:872px">$1,001,986,...</span>
<span class="c k6" style="left:1271px">Medical - Eq...</span>
<span class="c k7" style="left:1480px">Healthcare</span>
<span class="c r k8" style="right:246px">0.4614</span>
<span class="c r k9" style="right:12px">1.8554</span>
</div>
<div class="row alt" style="top:882px">
<span class="c k0" style="left:13px">AAM</span>
<span class="c k1" style="left:221px">AA Mission...</span>
<span class="c k2" style="left:431px">United States</span>
<span class="c k3" style="left:640px">NYSE - New...</span>
<span class="c r k4" style="right:1082px">183.4393</span>
<span class="c r k5" style="right:872px">$461,727,000</span>
<span class="c k6" style="left:1271px">Shell Compa...</span>
<span class="c k7" style="left:1480px">Financial Se...</span>
<span class="c r k8" style="right:246px">2.1518</span>
<span class="c r k9" style="right:12px">0.2986</span>
</div>
<div class="row" style="top:930px">
<span class="c k0" style="left:13px">INR</span>
<span class="c k1" style="left:221px">Infinity Natu...</span>
<span class="c k2" style="left:431px">United States</span>
<span class="c k3" style="left:640px">NYSE - New...</span>
<span class="c r k4" style="right:1082px">5.5064</span>
<span class="c r k5" style="right:872px">$207,230,000</span>
<span class="c k6" style="left:1271px">Oil &amp; Gas Ex...</span>
<span class="c k7" style="left:1480px">Energy</span>
<span class="c r k8" style="right:246px">0.0017</span>
<span class="c r k9" style="right:12px">0.6025</span>
</div>
<div class="row alt" style="top:978px">
<span class="c k0" style="left:13px">VTI.CN</span>
<span class="c k1" style="left:221px">Valdor Tech...</span>
<span class="c k2" style="left:431px">Canada</span>
<span class="c k3" style="left:640px">CNQ - Cana...</span>
<span class="c r k4" style="right:1082px">-28.0511</span>
<span class="c r k5" style="right:872px">CA$4,988,760</span>
<span class="c k6" style="left:1271px">Communicat...</span>
<span class="c k7" style="left:1480px">Technology</span>
<span class="c r k8" style="right:246px">-22.3469</span>
<span class="c r k9" style="right:12px">6.2695</span>
</div>
<div class="row" style="top:1026px">
<span class="c k0" style="left:13px">SO.MI</span>
<span class="c k1" style="left:221px">Sogefi S.p.A.</span>
<span class="c k2" style="left:431px">Italy</span>
<span class="c k3" style="left:640px">MIL - Milan...</span>
<span class="c r k4" style="right:1082px">5.2635</span>
<span class="c r k5" style="right:872px">€315,643,167</span>
<span class="c k6" style="left:1271px">Auto - Parts</span>
<span class="c k7" style="left:1480px">Consumer C...</span>
<span class="c r k8" style="right:246px">1.0107</span>
<span class="c r k9" style="right:12px">0.2140</span>
</div>
<div class="row alt" style="top:1074px">
<span class="c k0" style="left:13px">BIOA</span>
<span class="c k1" style="left:221px">BioAge Labs...</span>
<span class="c k2" style="left:431px">United States</span>
<span class="c k3" style="left:640px">NASDAQ - N...</span>
<span class="c r k4" style="right:1082px">-0.2211</span>
<span class="c r k5" style="right:872px">$187,137,193</span>
<span class="c k6" style="left:1271px">Drug Manuf...</span>
<span class="c k7" style="left:1480px">Healthcare</span>
<span class="c r k8" style="right:246px">0.0558</span>
<span class="c r k9" style="right:12px">4.5231</span>
</div>
<div class="row" style="top:1122px">
<span class="c k0" style="left:13px">ISAE4.SA</span>
<span class="c k1" style="left:221px">ISA Energía...</span>
<span class="c k2" style="left:431px">Brazil</span>
<span class="c k3" style="left:640px">SAO - São P...</span>
<span class="c r k4" style="right:1082px">4.8253</span>
<span class="c r k5" style="right:872px">R$17,374,17...</span>
<span class="c k6" style="left:1271px">Independent...</span>
<span class="c k7" style="left:1480px">Utilities</span>
<span class="c r k8" style="right:246px">0.7512</span>
<span class="c r k9" style="right:12px">1.9177</span>
</div>
<div class="row alt" style="top:1170px">
<span class="c k0" style="left:13px">XYZ</span>
<span class="c k1" style="left:221px">Block, Inc.</span>
<span class="c k2" style="left:431px">United States</span>
<span class="c k3" style="left:640px">NYSE - New...</span>
<span class="c r k4" style="right:1082px">16.1949</span>
<span class="c r k5" style="right:872px">$47,163,188,...</span>
<span class="c k6" style="left:1271px">Software - I...</span>
<span class="c k7" style="left:1480px">Technology</span>
<span class="c r k8" style="right:246px">2.2349</span>
<span class="c r k9" style="right:12px">2.0099</span>
</div>
<div class="row" style="top:1218px">
<span class="c k0" style="left:13px">CNR</span>
<span class="c k1" style="left:221px">Core Natural...</span>
<span class="c k2" style="left:431px">United States</span>
<span class="c k3" style="left:640px">NYSE - New...</span>
<span class="c r k4" style="right:1082px">111.0586</span>
<span class="c r k5" style="right:872px">$3,973,601,...</span>
<span class="c k6" style="left:1271px">Coal</span>
<span class="c k7" style="left:1480px">Energy</span>
<span class="c r k8" style="right:246px">0.5878</span>
<span class="c r k9" style="right:12px">0.7070</span>
</div>
<div class="row alt" style="top:1266px"></div>
</div>
<div class="card" style="left:30px;top:1697px;width:2214px;height:98px"></div>
<div class="pg" style="left:826px;top:1731px;color:#e2e2e2;letter-spacing:0">64</div>
<svg style="position:absolute;left:864px;top:1733px" width="20" height="30" viewBox="0 0 20 30"><path d="M4 11l6-6 6 6M4 19l6 6 6-6" fill="none" stroke="#cfcfcf" stroke-width="2.6" stroke-linecap="round" stroke-linejoin="round"/></svg>
<div class="pg" style="left:909px;top:1731px;color:#9a9a9a">items per page</div>
<div class="pg" style="left:1122px;top:1731px;color:#9a9a9a;letter-spacing:.8px">1 of 500 pages</div>
<div class="pbtn" style="left:1339px;background:#252525"><svg width="60" height="58" viewBox="0 0 60 58"><path d="M34 20l-10 9.5 10 9.5" fill="none" stroke="#3a3a3a" stroke-width="2.6" stroke-linecap="round" stroke-linejoin="round"/></svg></div>
<div class="pbtn" style="left:1411px"><svg width="60" height="58" viewBox="0 0 60 58"><path d="M26 20l10 9.5-10 9.5" fill="none" stroke="#b8b8b8" stroke-width="2.6" stroke-linecap="round" stroke-linejoin="round"/></svg></div>
</div>
<!-- RIGHT -->
<div id="rline"></div>
<div id="right">
<div id="seg"><b></b><span style="left:-1px">Filters</span><span style="left:230px">Saved</span></div>
<div id="rdiv"></div>
<div id="sf"><span>Search filter...</span></div>
<div class="gh" style="top:222px"><span style="letter-spacing:0.1px">Company Info</span><svg class="info" width="20" height="20" viewBox="0 0 20 20"><circle cx="10" cy="10" r="10.1" fill="#5e5ce2"/><circle cx="9.9" cy="5.4" r="1.45" fill="#1e1e1e"/><path d="M8 8.9h3.3v5.8h1.7v1.2H7.8v-1.2h1.9v-4.6H8z" fill="#1e1e1e"/></svg></div>
<i class="cb" style="top:288px"></i>
<div class="cl" style="top:287px;letter-spacing:0.67px">Industry</div>
<i class="cb on" style="top:340px"><svg width="30" height="30" viewBox="0 0 30 30"><path d="M8 16.1 L13 22.2 L21.6 9" fill="none" stroke="#1e1e1e" stroke-width="2.4" stroke-linecap="round" stroke-linejoin="round"/></svg></i>
<div class="cl" style="top:339px;letter-spacing:0.62px">Country</div>
<i class="cb on" style="top:392px"><svg width="30" height="30" viewBox="0 0 30 30"><path d="M8 16.1 L13 22.2 L21.6 9" fill="none" stroke="#1e1e1e" stroke-width="2.4" stroke-linecap="round" stroke-linejoin="round"/></svg></i>
<div class="cl" style="top:391px;letter-spacing:0.5px">Sector</div>
<i class="cb on" style="top:444px"><svg width="30" height="30" viewBox="0 0 30 30"><path d="M8 16.1 L13 22.2 L21.6 9" fill="none" stroke="#1e1e1e" stroke-width="2.4" stroke-linecap="round" stroke-linejoin="round"/></svg></i>
<div class="cl" style="top:443px;letter-spacing:-0.07px">Exchange</div>
<div class="gh" style="top:491px"><span style="letter-spacing:0.2px">Valuation Ratios</span><svg class="info" width="20" height="20" viewBox="0 0 20 20"><circle cx="10" cy="10" r="10.1" fill="#5e5ce2"/><circle cx="9.9" cy="5.4" r="1.45" fill="#1e1e1e"/><path d="M8 8.9h3.3v5.8h1.7v1.2H7.8v-1.2h1.9v-4.6H8z" fill="#1e1e1e"/></svg></div>
<i class="cb" style="top:557px"></i>
<div class="cl" style="top:556px;letter-spacing:0.54px">Market Capitalization</div>
<i class="cb" style="top:609px"></i>
<div class="cl" style="top:608px;letter-spacing:-0.45px">P/E (PE) Ratio</div>
<i class="cb on" style="top:661px"><svg width="30" height="30" viewBox="0 0 30 30"><path d="M8 16.1 L13 22.2 L21.6 9" fill="none" stroke="#1e1e1e" stroke-width="2.4" stroke-linecap="round" stroke-linejoin="round"/></svg></i>
<div class="cl" style="top:660px;letter-spacing:-0.18px">P/B (PB) Ratio</div>
<i class="cb on" style="top:713px"><svg width="30" height="30" viewBox="0 0 30 30"><path d="M8 16.1 L13 22.2 L21.6 9" fill="none" stroke="#1e1e1e" stroke-width="2.4" stroke-linecap="round" stroke-linejoin="round"/></svg></i>
<div class="cl" style="top:712px;letter-spacing:-0.25px">P/S (PS) Ratio</div>
<i class="cb" style="top:765px"></i>
<div class="cl" style="top:764px;letter-spacing:-0.4px">P/FCF (PFCF) Ratio</div>
<i class="cb" style="top:817px"></i>
<div class="cl" style="top:816px;letter-spacing:-0.45px">P/OCF Ratio</div>
<i class="cb" style="top:869px"></i>
<div class="cl" style="top:868px;letter-spacing:-2.6px">PEG</div>
<i class="cb" style="top:921px"></i>
<div class="cl" style="top:920px;letter-spacing:-0.38px">P/EBITDA Ratio</div>
<i class="cb" style="top:973px"></i>
<div class="cl" style="top:972px;letter-spacing:-0.4px">P/EBIT Ratio</div>
<i class="cb" style="top:1025px"></i>
<div class="cl" style="top:1024px;letter-spacing:0.34px">Enterprise Value</div>
<i class="cb" style="top:1077px"></i>
<div class="cl" style="top:1076px;letter-spacing:-1.13px">EV/EBITDA</div>
<i class="cb" style="top:1129px"></i>
<div class="cl" style="top:1128px;letter-spacing:-0.77px">EV/Sales</div>
<i class="cb" style="top:1181px"></i>
<div class="cl" style="top:1180px;letter-spacing:-1.5px">EV/OCF</div>
<i class="cb" style="top:1233px"></i>
<div class="cl" style="top:1232px;letter-spacing:0.35px">EV Multiplier</div>
<i class="cb" style="top:1285px"></i>
<div class="cl" style="top:1284px;letter-spacing:-0.24px">FCF Yield</div>
<div class="gh" style="top:1332px"><span style="letter-spacing:0.5px">Profitability Ratios</span><svg class="info" width="20" height="20" viewBox="0 0 20 20"><circle cx="10" cy="10" r="10.1" fill="#5e5ce2"/><circle cx="9.9" cy="5.4" r="1.45" fill="#1e1e1e"/><path d="M8 8.9h3.3v5.8h1.7v1.2H7.8v-1.2h1.9v-4.6H8z" fill="#1e1e1e"/></svg></div>
<i class="cb" style="top:1398px"></i>
<div class="cl" style="top:1397px;letter-spacing:0.04px">Return On Equity (ROE)</div>
<i class="cb" style="top:1450px"></i>
<div class="cl" style="top:1449px;letter-spacing:0.17px">Return On Assets (ROA)</div>
<i class="cb" style="top:1502px"></i>
<div class="cl" style="top:1501px;letter-spacing:0.29px">Return On Tangible Assets (ROTA)</div>
<i class="cb" style="top:1570px"></i><div class="cl" style="top:1553px;letter-spacing:0.29px">Return On Capital Employed<br><span style="letter-spacing:-.9px">(ROCE)</span></div>
<i class="cb" style="top:1638px"></i>
<div class="cl" style="top:1637px;letter-spacing:0.22px">Return On Invested Capital (ROIC)</div>
<i class="cb" style="top:1690px"></i>
<div class="cl" style="top:1689px;letter-spacing:0.44px">Gross Profit Margin</div>
<i class="cb" style="top:1742px"></i>
<div class="cl" style="top:1741px;letter-spacing:0.59px">Operating Profit Margin</div>
<i class="cb" style="top:1794px"></i>
<div class="cl" style="top:1793px;letter-spacing:0.5px">Net Profit Margin</div>
</div>
<div id="barline"></div>
</div>
</body></html>
